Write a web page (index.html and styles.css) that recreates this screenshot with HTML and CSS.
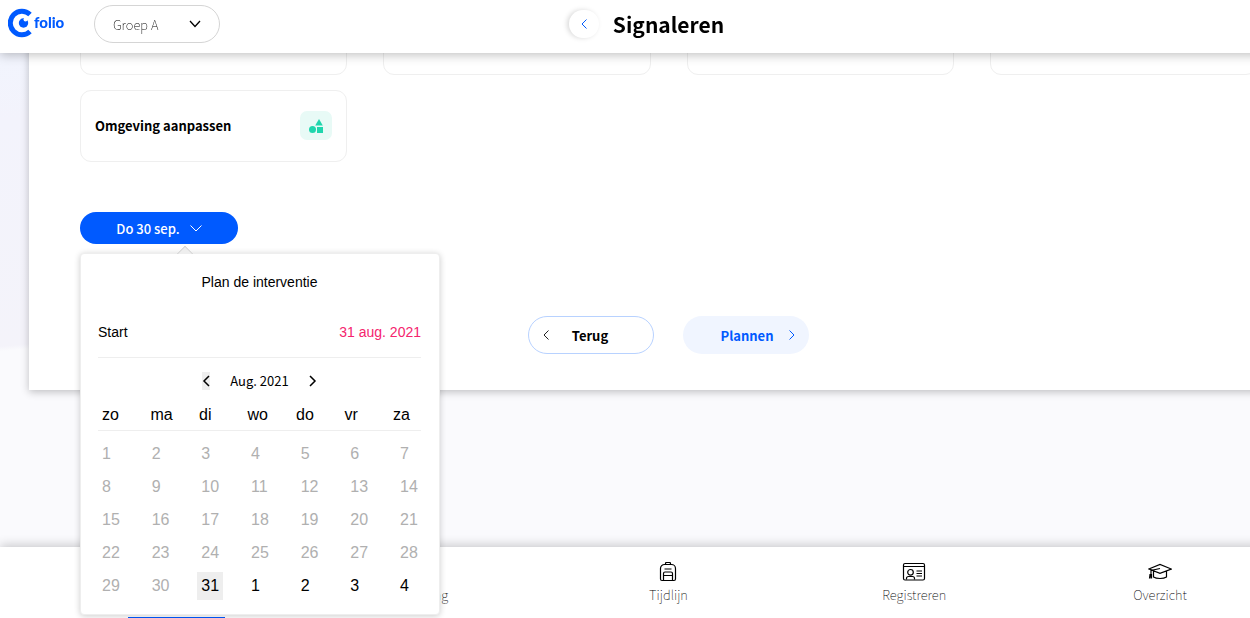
FILE: index.html
```html
<!DOCTYPE html>
<html lang="nl">
<head>
    <meta charset="UTF-8">
    <meta name="viewport" content="width=device-width, initial-scale=1.0">
    <title>Signaleren</title>
    <link rel="stylesheet" href="styles.css">
</head>
<body>
    <div class="app">
        <header class="topbar">
            <a href="#" class="logo">
                <svg width="26" height="30" viewBox="0 0 26 30" aria-hidden="true">
                    <path d="M22 6.500A11.700 11.700 0 1 0 22 23.500" fill="none" stroke="#005aff" stroke-width="5"/>
                    <circle cx="15.500" cy="15" r="4.700" fill="#005aff"/>
                    <circle cx="17.500" cy="11.500" r="2" fill="#fff"/>
                </svg>
                <span>folio</span>
            </a>
            <button class="group-select">
                <span>Groep A</span>
                <svg width="12" height="8" viewBox="0 0 12 8"><path d="M1 1l5 5.500L11 1" fill="none" stroke="#000" stroke-width="1.300"/></svg>
            </button>
            <div class="title-bar">
                <button class="back-btn" aria-label="Terug">
                    <svg width="6" height="10" viewBox="0 0 6 10"><path d="M5.500 .5L1 5l4.500 4.500" fill="none" stroke="#005aff"/></svg>
                </button>
                <h1>Signaleren</h1>
            </div>
        </header>

        <main>
            <section class="panel">
                <div class="cards">
                    <div class="card"><span class="card-icon blue"></span></div>
                    <div class="card"><span class="card-icon red"></span></div>
                    <div class="card"><span class="card-icon blue"></span></div>
                    <div class="card"><span class="card-icon yellow"></span></div>
                    <div class="card">
                        <span>Omgeving aanpassen</span>
                        <span class="card-icon green">
                            <svg width="14" height="14" viewBox="0 0 14 14" fill="#1fd6ad">
                                <path d="M10 0l3.800 6.500H6.200z"/>
                                <circle cx="3.500" cy="10.500" r="3.500"/>
                                <rect x="8" y="8" width="6" height="6"/>
                            </svg>
                        </span>
                    </div>
                </div>

                <div class="date-picker">
                    <button class="date-btn">
                        <span>Do 30 sep.</span>
                        <svg width="12" height="7" viewBox="0 0 12 7"><path d="M.5 .5L6 6l5.500-5.500" fill="none" stroke="#fff"/></svg>
                    </button>

                    <div class="popover">
                        <p class="popover-title">Plan de interventie</p>
                        <div class="start-row">
                            <span>Start</span>
                            <span class="start-date">31 aug. 2021</span>
                        </div>
                        <div class="month-nav">
                            <button class="month-btn active" aria-label="Vorige maand">
                                <svg width="8" height="12" viewBox="0 0 8 12"><path d="M7 1L2 6l5 5" fill="none" stroke="#000" stroke-width="1.500"/></svg>
                            </button>
                            <span>Aug. 2021</span>
                            <button class="month-btn" aria-label="Volgende maand">
                                <svg width="8" height="12" viewBox="0 0 8 12"><path d="M1 1l5 5-5 5" fill="none" stroke="#000" stroke-width="1.500"/></svg>
                            </button>
                        </div>
                        <table class="calendar">
                            <thead>
                                <tr><th>zo</th><th>ma</th><th>di</th><th>wo</th><th>do</th><th>vr</th><th>za</th></tr>
                            </thead>
                            <tbody id="days"></tbody>
                        </table>
                    </div>
                </div>

                <div class="actions">
                    <button class="action-btn outline">
                        <svg width="6" height="10" viewBox="0 0 6 10"><path d="M5.500 .5L1 5l4.500 4.500" fill="none" stroke="#222"/></svg>
                        <span>Terug</span>
                    </button>
                    <button class="action-btn filled">
                        <span>Plannen</span>
                        <svg width="6" height="10" viewBox="0 0 6 10"><path d="M.5 .5L5 5 .5 9.500" fill="none" stroke="#005aff"/></svg>
                    </button>
                </div>
            </section>
        </main>

        <nav class="bottom-nav">
            <a href="#" class="active"></a>
            <a href="#">
                <span>Planning</span>
            </a>
            <a href="#">
                <svg width="24" height="20" viewBox="0 0 24 20" fill="none" stroke="#000" stroke-width="1.200">
                    <path d="M4.500 17V6.500a4 4 0 0 1 4-4h7a4 4 0 0 1 4 4V17a1.500 1.500 0 0 1-1.500 1.500H6A1.500 1.500 0 0 1 4.500 17z"/>
                    <path d="M9.500 2.500V1.500a1 1 0 0 1 1-1h3a1 1 0 0 1 1 1v1M8.500 7h7M7.500 18.500v-7a1.500 1.500 0 0 1 1.500-1.500h6a1.500 1.500 0 0 1 1.500 1.500v7M7.500 13.500h9"/>
                </svg>
                <span>Tijdlijn</span>
            </a>
            <a href="#">
                <svg width="24" height="20" viewBox="0 0 24 20" fill="none" stroke="#000" stroke-width="1.200">
                    <rect x="1.500" y="1.500" width="21" height="16.500" rx="1.500"/>
                    <path d="M1.500 4.500h21M14.500 9h5.500M14.500 11.500h5.500M14.500 14h5.500M4.500 17.500v-1a2 2 0 0 1 2-2h4a2 2 0 0 1 2 2v1"/>
                    <circle cx="8.500" cy="10.300" r="2.800"/>
                </svg>
                <span>Registreren</span>
            </a>
            <a href="#">
                <svg width="24" height="20" viewBox="0 0 24 20" fill="none" stroke="#000" stroke-width="1.200">
                    <path d="M.8 7L12 2.500 23.300 7 12 11.300zM5.500 9v6c3 2 10 2 13 0V9M12 6.500L3 8.500v8M1.500 16.500l.5-4h1.500v4"/>
                </svg>
                <span>Overzicht</span>
            </a>
        </nav>
    </div>

    <script>
        const days = document.getElementById('days');
        const selected = 31;

        // August 2021 starts on a sunday, five weeks are shown
        for (let week = 0; week < 5; week++) {
            const row = document.createElement('tr');
            for (let i = 1; i <= 7; i++) {
                const nr = week * 7 + i;
                const cell = document.createElement('td');
                const button = document.createElement('button');
                button.textContent = nr > 31 ? nr - 31 : nr;
                button.disabled = nr < selected;
                if (nr === selected) {
                    button.classList.add('selected');
                }
                cell.appendChild(button);
                row.appendChild(cell);
            }
            days.appendChild(row);
        }
    </script>
</body>
</html>
```

FILE: styles.css
```css
* {
    margin: 0;
    padding: 0;
    box-sizing: border-box;
}

body {
    font-family: 'Noto Sans CJK SC', 'Open Sans', sans-serif;
    font-size: 14px;
    color: #000;
    background: #fafafd;
    overflow-x: hidden;
}

button {
    font: inherit;
    color: inherit;
    background: none;
    border: none;
    cursor: pointer;
}

a {
    color: inherit;
    text-decoration: none;
}

svg {
    display: block;
}

.app {
    min-width: 1337px;
    min-height: 100vh;
    display: flex;
    flex-direction: column;
}

/* Top bar */
.topbar {
    position: fixed;
    top: 0;
    left: 0;
    width: 100%;
    min-width: 1337px;
    height: 53px;
    padding: 0 8px;
    display: grid;
    grid-template-columns: 86px 1fr auto 1fr 86px;
    align-items: center;
    background: #fff;
    box-shadow: 0 2px 10px rgba(0, 0, 0, 0.25);
    z-index: 10;
}

.logo {
    display: flex;
    align-items: center;
    padding-bottom: 7px;
    color: #005aff;
    font-family: Lato, sans-serif;
    font-size: 15px;
    line-height: 16px;
    font-weight: 900;
}

.logo span {
    padding-bottom: 3px;
}

.group-select {
    display: flex;
    align-items: center;
    justify-content: space-between;
    width: 126px;
    height: 38px;
    margin-bottom: 5px;
    padding: 0 18px;
    border: 1px solid #d5d5d5;
    border-radius: 19px;
    font-weight: 100;
    font-size: 13px;
}

.title-bar {
    display: flex;
    align-items: center;
    gap: 14px;
    padding-right: 44px;
    padding-bottom: 6px;
}

.back-btn {
    display: flex;
    align-items: center;
    justify-content: center;
    width: 30px;
    height: 28px;
    border-radius: 14px;
    box-shadow: -2px 0 5px rgba(0, 0, 0, 0.15);
}

h1 {
    font-size: 21px;
    line-height: 32px;
    font-weight: 700;
}

/* Content */
main {
    flex: 1;
    padding: 0 29px;
    background: linear-gradient(175deg, #f0f5fe 0, #f3f3fc 120px, #f4f3fa 345px, #fafafd 350px);
}

.panel {
    padding: 3px 51px 36px;
    background: #fff;
    box-shadow: 0 2px 8px rgba(0, 0, 0, 0.24);
}

.cards {
    display: grid;
    grid-template-columns: repeat(4, 1fr);
    gap: 15px 36px;
}

.card {
    display: flex;
    align-items: center;
    justify-content: space-between;
    height: 72px;
    padding: 0 14px 1px;
    border: 1px solid #efefef;
    border-radius: 11px;
    font-size: 13px;
    font-weight: 700;
}

.card-icon {
    display: flex;
    align-items: center;
    justify-content: center;
    width: 32px;
    height: 29px;
    margin-left: auto;
    border-radius: 7px;
}

.card-icon.blue {
    background: #e3f3fe;
}

.card-icon.red {
    background: #ffe5e9;
}

.card-icon.yellow {
    background: #fbf7e0;
}

.card-icon.green {
    background: #e8faf6;
}

/* Date picker */
.date-picker {
    position: relative;
    width: 158px;
    margin-top: 50px;
}

.date-btn {
    display: flex;
    align-items: center;
    justify-content: center;
    gap: 10px;
    width: 100%;
    height: 32px;
    border-radius: 16px;
    background: #005aff;
    color: #fff;
    font-size: 13px;
    font-weight: 500;
}

.popover {
    position: absolute;
    top: 41px;
    left: 0;
    width: 360px;
    padding: 19px 18px 12px 17px;
    background: #fff;
    border: 1px solid #eee;
    border-radius: 4px;
    box-shadow: 0 1px 6px rgba(0, 0, 0, 0.2);
    font-family: 'Liberation Sans', Arial, sans-serif;
    z-index: 20;
}

.popover::before {
    content: '';
    position: absolute;
    top: -6px;
    left: 98px;
    width: 11px;
    height: 11px;
    background: #eee;
    border: 1px solid #d0d0d0;
    border-right: none;
    border-bottom: none;
    transform: rotate(45deg);
    clip-path: polygon(0 0, 100% 0, 0 100%);
}

.popover-title {
    text-align: center;
    line-height: 18px;
}

.start-row {
    display: flex;
    justify-content: space-between;
    padding: 32px 0 16px;
    line-height: 18px;
    border-bottom: 1px solid #eee;
}

.start-date {
    color: #f5246e;
}

.month-nav {
    display: flex;
    align-items: center;
    justify-content: center;
    gap: 20px;
    height: 46px;
    padding-bottom: 1px;
    font-family: 'Noto Sans CJK SC', 'Open Sans', sans-serif;
    font-size: 13px;
}

.month-btn {
    padding: 3px 0;
}

.month-btn.active {
    background: #eee;
}

.calendar,
.calendar thead,
.calendar tbody {
    display: block;
    font-size: 16px;
}

.calendar tr {
    display: grid;
    grid-template-columns: repeat(6, 1fr) 25px;
    align-items: center;
    height: 33px;
}

.calendar thead {
    border-bottom: 1px solid #eee;
}

.calendar thead tr {
    grid-template-columns: repeat(6, 1fr) 32px;
    height: 26px;
    padding-bottom: 4px;
}

.calendar tbody {
    padding-top: 6px;
}

.calendar th {
    padding-left: 4px;
    font-weight: 400;
    line-height: 20px;
    text-align: left;
}

.calendar button {
    height: 28px;
    padding: 0 4px;
}

.calendar button:disabled {
    color: #b0b0b0;
    cursor: default;
}

.calendar .selected {
    background: #eee;
}

/* Buttons under the form */
.actions {
    display: flex;
    justify-content: center;
    gap: 29px;
    margin-top: 72px;
}

.action-btn {
    display: flex;
    align-items: center;
    width: 126px;
    height: 38px;
    padding: 0 14px;
    border-radius: 19px;
    font-size: 13px;
    font-weight: 700;
}

.action-btn span {
    flex: 1;
}

.outline {
    border: 1px solid #b8d2ff;
}

.outline span {
    padding-right: 8px;
}

.filled {
    background: #f0f5ff;
    color: #005aff;
}

.filled span {
    padding-left: 8px;
}

/* Bottom navigation */
.bottom-nav {
    display: grid;
    grid-template-columns: repeat(5, 1fr);
    height: 71px;
    padding: 0 54px;
    background: #fff;
    box-shadow: 0 -2px 10px rgba(0, 0, 0, 0.2);
}

.bottom-nav a {
    display: flex;
    flex-direction: column;
    align-items: center;
    justify-content: flex-end;
    gap: 3px;
    padding-bottom: 13px;
    font-size: 13px;
    line-height: 20px;
    font-weight: 100;
}

.bottom-nav .active {
    padding-bottom: 0;
}

.bottom-nav .active::after {
    content: '';
    width: 97px;
    height: 1px;
    background: #005aff;
}
```
